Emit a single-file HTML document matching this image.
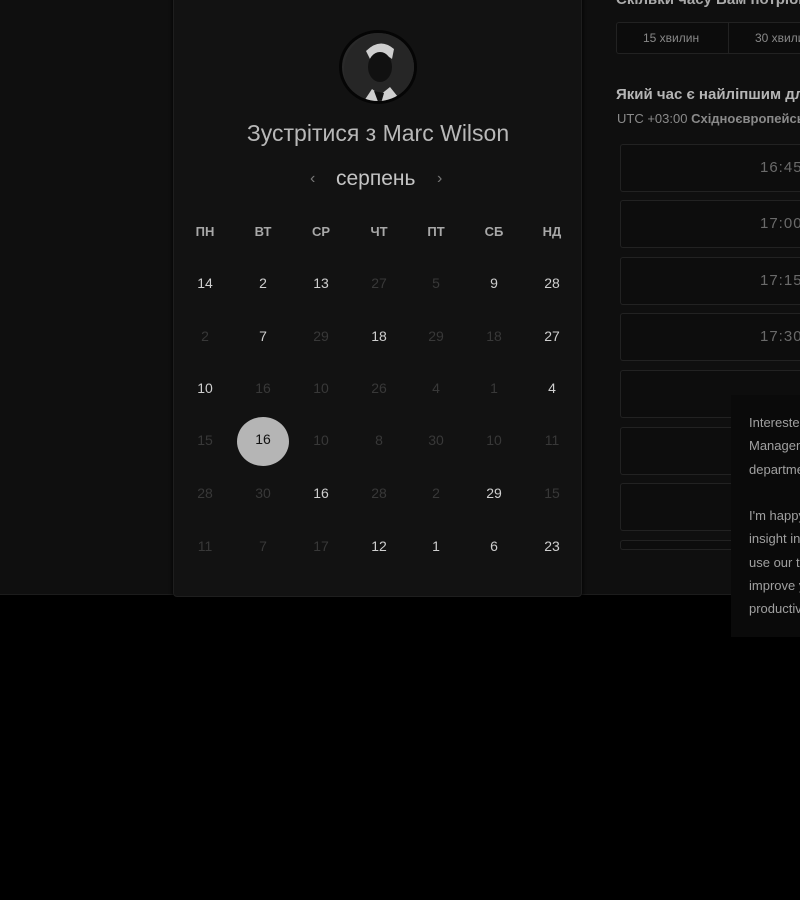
<!DOCTYPE html>
<html><head><meta charset="utf-8"><style>
*{margin:0;padding:0;box-sizing:border-box}
html,body{width:800px;height:900px;overflow:hidden;background:#000}
body{font-family:"Liberation Sans","DejaVu Sans",sans-serif}
#w{position:relative;width:800px;height:900px;overflow:hidden}
.top{position:absolute;left:0;top:0;width:800px;height:595px;background:#0f0f0f;border-bottom:1px solid #1c1c1c}
.card{position:absolute;left:173px;top:-10px;width:409px;height:607px;background:#121212;border:1px solid #1e1e1e;border-radius:4px;box-shadow:0 2px 4px #000}
.av{position:absolute;left:339px;top:30px;width:78px;height:74px;border-radius:50%;background:#2a2a2a;border:3px solid #050505;overflow:hidden}
.t{position:absolute;color:#bdbdbd;white-space:nowrap}
.d{position:absolute;width:50px;text-align:center;font-size:14px;transform:translate(-25px,-9px)}
.b{color:#cfcfcf}.m{color:#383838}
.h{position:absolute;width:50px;text-align:center;font-size:13px;font-weight:bold;color:#a8a8a8;transform:translate(-25px,-8px)}
.slot{position:absolute;left:620px;width:180px;height:48px;border:1px solid #222;border-right:none;border-radius:3px 0 0 3px;background:#0d0d0d;color:#6a6a6a;font-size:15px;line-height:46px;letter-spacing:1px;overflow:hidden;white-space:nowrap}
.slot span{position:absolute;left:139px}
</style></head><body><div id="w">
<div class="top"></div>
<div class="card"></div>
<div class="av"><svg width="78" height="74" viewBox="0 0 78 74"><circle cx="39" cy="37" r="37" fill="#262626"/><path d="M24 18 Q38 4 52 16 L50 26 Q40 18 28 26Z" fill="#cfcfcf"/><ellipse cx="38" cy="34" rx="12" ry="15" fill="#111"/><path d="M18 74 L30 56 L38 62 L48 54 L64 74Z" fill="#cfcfcf"/><path d="M32 58 L38 74 L42 60Z" fill="#111"/></svg></div>
<div class="t" style="left:178px;width:400px;top:120px;text-align:center;font-size:23px;color:#b8b8b8;font-weight:300">Зустрітися з Marc Wilson</div>
<div class="t" style="left:310px;top:170px;font-size:16px;color:#777">‹</div>
<div class="t" style="left:336px;top:167px;font-size:21px;color:#c4c4c4">серпень</div>
<div class="t" style="left:437px;top:170px;font-size:16px;color:#777">›</div>
<div class="h" style="left:205px;top:232px">ПН</div><div class="h" style="left:263px;top:232px">ВТ</div><div class="h" style="left:321px;top:232px">СР</div><div class="h" style="left:379px;top:232px">ЧТ</div><div class="h" style="left:436px;top:232px">ПТ</div><div class="h" style="left:494px;top:232px">СБ</div><div class="h" style="left:552px;top:232px">НД</div>
<div class="d b" style="left:205px;top:284px">14</div><div class="d b" style="left:263px;top:284px">2</div><div class="d b" style="left:321px;top:284px">13</div><div class="d m" style="left:379px;top:284px">27</div><div class="d m" style="left:436px;top:284px">5</div><div class="d b" style="left:494px;top:284px">9</div><div class="d b" style="left:552px;top:284px">28</div>
<div class="d m" style="left:205px;top:337px">2</div><div class="d b" style="left:263px;top:337px">7</div><div class="d m" style="left:321px;top:337px">29</div><div class="d b" style="left:379px;top:337px">18</div><div class="d m" style="left:436px;top:337px">29</div><div class="d m" style="left:494px;top:337px">18</div><div class="d b" style="left:552px;top:337px">27</div>
<div class="d b" style="left:205px;top:389px">10</div><div class="d m" style="left:263px;top:389px">16</div><div class="d m" style="left:321px;top:389px">10</div><div class="d m" style="left:379px;top:389px">26</div><div class="d m" style="left:436px;top:389px">4</div><div class="d m" style="left:494px;top:389px">1</div><div class="d b" style="left:552px;top:389px">4</div>
<div style="position:absolute;left:237px;top:417px;width:52px;height:49px;border-radius:50%;background:#b5b5b5"></div>
<div class="d m" style="left:205px;top:441px">15</div><div class="d" style="left:263px;top:440px;color:#111">16</div><div class="d m" style="left:321px;top:441px">10</div><div class="d m" style="left:379px;top:441px">8</div><div class="d m" style="left:436px;top:441px">30</div><div class="d m" style="left:494px;top:441px">10</div><div class="d m" style="left:552px;top:441px">11</div>
<div class="d m" style="left:205px;top:494px">28</div><div class="d m" style="left:263px;top:494px">30</div><div class="d b" style="left:321px;top:494px">16</div><div class="d m" style="left:379px;top:494px">28</div><div class="d m" style="left:436px;top:494px">2</div><div class="d b" style="left:494px;top:494px">29</div><div class="d m" style="left:552px;top:494px">15</div>
<div class="d m" style="left:205px;top:547px">11</div><div class="d m" style="left:263px;top:547px">7</div><div class="d m" style="left:321px;top:547px">17</div><div class="d b" style="left:379px;top:547px">12</div><div class="d b" style="left:436px;top:547px">1</div><div class="d b" style="left:494px;top:547px">6</div><div class="d b" style="left:552px;top:547px">23</div>
<div class="t" style="left:616px;top:-9px;font-size:15px;font-weight:bold;color:#aaa">Скільки часу Вам потрібно?</div>
<div style="position:absolute;left:616px;top:22px;width:184px;height:32px;border:1px solid #222;border-right:none;border-radius:3px 0 0 3px;background:#0c0c0c"></div>
<div style="position:absolute;left:728px;top:22px;width:1px;height:32px;background:#222"></div>
<div class="t" style="left:643px;top:31px;font-size:12px;color:#888">15 хвилин</div>
<div class="t" style="left:755px;top:31px;font-size:12px;color:#888">30 хвилин</div>
<div class="t" style="left:616px;top:86px;font-size:15px;font-weight:bold;color:#b5b5b5">Який час є найліпшим для Вас?</div>
<div class="t" style="left:617px;top:111px;font-size:13px;color:#8a8a8a">UTC +03:00 <b>Східноєвропейський час</b></div>
<div class="slot" style="top:144px"><span>16:45</span></div>
<div class="slot" style="top:200px"><span>17:00</span></div>
<div class="slot" style="top:257px"><span>17:15</span></div>
<div class="slot" style="top:313px"><span>17:30</span></div>
<div class="slot" style="top:370px"></div>
<div class="slot" style="top:427px"></div>
<div class="slot" style="top:483px"></div>
<div class="slot" style="top:540px;height:10px"></div>
<div style="position:absolute;left:731px;top:395px;width:69px;height:242px;background:#0a0a0a;padding:16px 0 0 18px;color:#a0a0a0;font-size:13px;line-height:23.3px;white-space:nowrap;overflow:hidden">Interested in Time<br>Management for your<br>department?<br><br>I'm happy to give you<br>insight into how you can<br>use our tool to<br>improve your team's<br>productivity.</div>
</div></body></html>
